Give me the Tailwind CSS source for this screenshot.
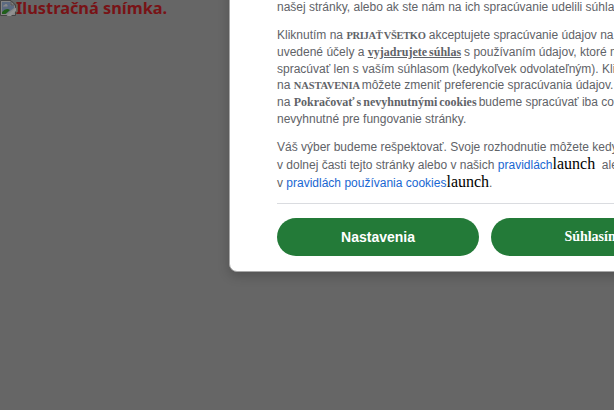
<!DOCTYPE html>
<html lang="sk">
<head>
<meta charset="utf-8">
<title>Nastavenia súkromia</title>
<script src="https://cdn.jsdelivr.net/npm/@tailwindcss/browser@4"></script>
</head>
<body class="bg-[#666666] h-[410px] overflow-hidden relative">
<div class="flex items-start h-4 whitespace-nowrap">
  <svg class="w-4 h-4 shrink-0" viewBox="0 0 16 16">
    <path d="M0.5 0.5H11L15.5 5V15.5H0.5Z" fill="#858585" stroke="#454545"/>
    <path d="M2 2H10.500V5.500H14V8L6 14H2Z" fill="#5c6a80"/>
    <path d="M3 6.500Q3 5 4.500 5Q5 3.500 6.500 4Q8 4.500 7.500 6.500Z" fill="#8a8a8a"/>
    <path d="M2 14V12Q6 7.500 10 10L5.500 14Z" fill="#215f1a"/>
    <path d="M11 1V5H15Z" fill="#808080" stroke="#454545" stroke-width=".7"/>
    <path d="M16 7.500L6.500 16H11L16 11Z" fill="#909090"/>
  </svg>
  <span class="font-['Noto_Sans',sans-serif] font-bold text-[16.35px] leading-[16px] text-[#781316]">Ilustračná snímka.</span>
</div>
<main class="absolute left-[229px] -top-[100px] w-[600px] h-[372px] rounded-lg bg-white border border-[#a8a8a8] shadow-[0_4px_12px_rgba(0,0,0,0.2)] px-[47px] pt-[99px] font-['Liberation_Sans',sans-serif] text-[12px] leading-[16.8px] text-[#5f6368] whitespace-nowrap">
  <p class="-mt-[1px]">našej stránky, alebo ak ste nám na ich spracúvanie udelili súhlas.</p>
  <div class="mt-[11.2px]">
    <p>Kliknutím na <b class="inline-block w-[79px] font-['Liberation_Serif',serif] text-[10.5px] leading-none tracking-[-0.3px] [word-spacing:-1px]">PRIJAŤ VŠETKO</b> akceptujete spracúvanie údajov na</p>
    <p>uvedené účely a <b class="inline-block w-[93px] font-['Liberation_Serif',serif] leading-none underline [word-spacing:-1px]">vyjadrujete súhlas</b> s používaním údajov, ktoré možno</p>
    <p>spracúvať len s vaším súhlasom (kedykoľvek odvolateľným). Kliknutím</p>
    <p>na <b class="inline-block w-[68px] font-['Liberation_Serif',serif] text-[10.5px] leading-none tracking-[-0.1px]">NASTAVENIA</b>môžete zmeniť preferencie spracúvania údajov. Kliknutím</p>
    <p>na <b class="inline-block w-[185px] font-['Liberation_Serif',serif] leading-none [word-spacing:-1px]">Pokračovať s nevyhnutnými cookies</b>budeme spracúvať iba cookies</p>
    <p>nevyhnutné pre fungovanie stránky.</p>
  </div>
  <div class="mt-[10.8px]">
    <p>Váš výber budeme rešpektovať. Svoje rozhodnutie môžete kedykoľvek</p>
    <p class="mt-px h-[18px] leading-[18px]">v dolnej časti tejto stránky alebo v našich <span class="text-[#1967d2]">pravidlách</span><span class="font-['Liberation_Serif',serif] text-[16px] leading-none text-black">launch</span>&nbsp; alebo</p>
    <p class="h-[18px] leading-[18px]">v <span class="text-[#1967d2]">pravidlách používania cookies</span><span class="font-['Liberation_Serif',serif] text-[16px] leading-none text-black">launch</span>.</p>
  </div>
  <div class="mt-[11px] pt-[14px] border-t border-[#dadce0] flex gap-3 text-white font-bold text-[14px]">
    <button class="w-[202px] h-[38px] shrink-0 rounded-full bg-[#237a38]">Nastavenia</button>
    <button class="w-[202px] h-[38px] shrink-0 rounded-full bg-[#237a38] font-['Liberation_Serif',serif]">Súhlasím</button>
  </div>
</main>
</body>
</html>
